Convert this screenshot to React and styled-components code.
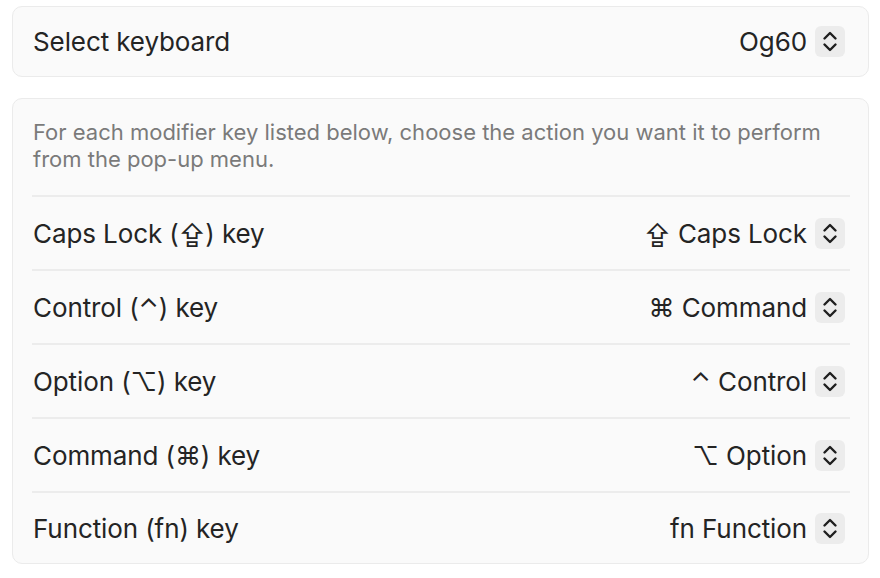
import React from "react";
import styled, { createGlobalStyle } from "styled-components";

const GlobalStyle = createGlobalStyle`
  html, body {
    margin: 0;
    padding: 0;
    background: #ffffff;
  }
  body {
    font-family: Inter, "Noto Sans", "DejaVu Sans", sans-serif;
    color: #242424;
    -webkit-font-smoothing: antialiased;
  }
  * {
    box-sizing: border-box;
  }
`;

const Page = styled.div`
  display: flex;
  flex-direction: column;
  gap: 21px;
  padding: 6px 11px 0 12px;
  width: 880px;
`;

const Card = styled.section`
  background: #fafafa;
  border: 1px solid #ebebeb;
  border-radius: 10px;
  padding: 0 18px 0 19px;
`;

const Description = styled.p`
  margin: 0;
  padding: 20px 0 22px 1px;
  font-size: 22px;
  line-height: 27px;
  color: #7a7a7a;
`;

const Row = styled.div`
  display: flex;
  align-items: center;
  justify-content: space-between;
  height: ${(props) => (props.$single ? "69px" : "74px")};
  border-top: ${(props) => (props.$single ? "none" : "2px solid #ececec")};
  &:last-child {
    height: ${(props) => (props.$single ? "69px" : "72px")};
  }
`;

const Label = styled.span`
  font-size: 26px;
  padding-left: 1px;
  letter-spacing: -0.1px;
`;

const Picker = styled.div`
  display: flex;
  align-items: center;
  gap: 8px;
  margin-right: 5px;
`;

const Value = styled.span`
  font-size: 26px;
  letter-spacing: -0.1px;
`;

const Stepper = styled.span`
  display: flex;
  align-items: center;
  justify-content: center;
  width: 30px;
  height: 31px;
  border-radius: 6px;
  background: #ececec;
`;

const Chevrons = () => (
  <svg width="30" height="31" viewBox="0 0 30 31" fill="none">
    <path
      d="M9.5 12.5 L15 7 L20.5 12.5"
      stroke="#1f1f1f"
      strokeWidth="2.4"
      strokeLinecap="round"
      strokeLinejoin="round"
    />
    <path
      d="M9.5 18.5 L15 24 L20.5 18.5"
      stroke="#1f1f1f"
      strokeWidth="2.4"
      strokeLinecap="round"
      strokeLinejoin="round"
    />
  </svg>
);

const modifiers = [
  { name: "Caps Lock", sym: "⇪", action: "⇪ Caps Lock" },
  { name: "Control", sym: "⌃", action: "⌘ Command" },
  { name: "Option", sym: "⌥", action: "⌃ Control" },
  { name: "Command", sym: "⌘", action: "⌥ Option" },
  { name: "Function", sym: "fn", action: "fn Function" },
];

const SelectValue = ({ children }) => (
  <Picker>
    <Value>{children}</Value>
    <Stepper>
      <Chevrons />
    </Stepper>
  </Picker>
);

const App = () => {
  return (
    <>
      <GlobalStyle />
      <Page>
        <Card>
          <Row $single>
            <Label>Select keyboard</Label>
            <SelectValue>Og60</SelectValue>
          </Row>
        </Card>
        <Card>
          <Description>
            For each modifier key listed below, choose the action you want it to
            perform from the pop-up menu.
          </Description>
          {modifiers.map((m) => (
            <Row key={m.name}>
              <Label>{`${m.name} (${m.sym}) key`}</Label>
              <SelectValue>{m.action}</SelectValue>
            </Row>
          ))}
        </Card>
      </Page>
    </>
  );
};

export default App;
